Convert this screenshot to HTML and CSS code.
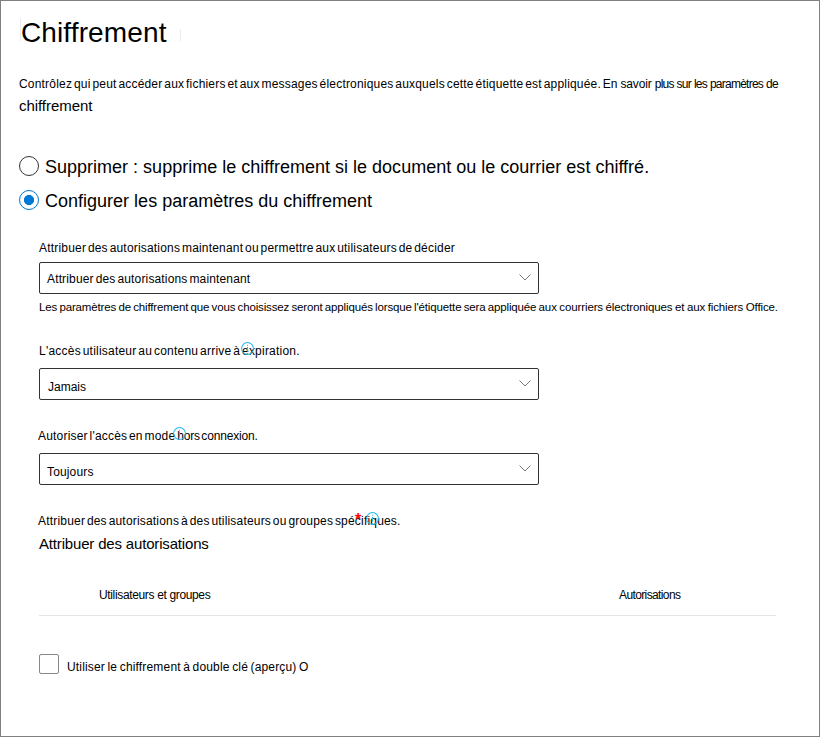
FILE: index.html
```html
<!DOCTYPE html>
<html lang="fr">
<head>
<meta charset="utf-8">
<title>Chiffrement</title>
<link rel="stylesheet" href="styles.css">
</head>
<body>
<main class="panel">
  <h1 class="title">Chiffrement</h1>
  <p class="intro">Contrôlez qui peut accéder aux fichiers et aux messages électroniques auxquels cette étiquette est appliquée. <span class="intro-link">En savoir <span class="tight">plus sur les paramètres de</span></span></p>
  <p class="intro-end">chiffrement</p>

  <div class="radios">
    <div class="radio"><span class="dot"></span><span class="radio-text">Supprimer : supprime le chiffrement si le document ou le courrier est chiffré.</span></div>
    <div class="radio"><span class="dot dot-on"></span><span class="radio-text">Configurer les paramètres du chiffrement</span></div>
  </div>

  <section class="settings">
    <div class="field field-assign">
      <div class="label">Attribuer des autorisations maintenant ou permettre aux utilisateurs de décider</div>
      <div class="select"><span class="value">Attribuer des autorisations maintenant</span><svg class="chevron" viewBox="0 0 12 7"><path d="M.5.5 6 6 11.5.5"/></svg></div>
      <div class="hint">Les paramètres de chiffrement que vous choisissez seront appliqués lorsque l'étiquette sera appliquée <span class="hint-end">aux courriers électroniques et aux fichiers Office.</span></div>
    </div>
    <div class="field field-expiry">
      <div class="label">L'accès utilisateur au contenu arrive à expiration.<svg class="info info-expiry" viewBox="0 0 14 14"><circle cx="7" cy="7" r="6.4"/><path d="M7 3v1M7 5.5v5"/></svg></div>
      <div class="select select-low"><span class="value value-in">Jamais</span><svg class="chevron" viewBox="0 0 12 7"><path d="M.5.5 6 6 11.5.5"/></svg></div>
    </div>
    <div class="field field-offline">
      <div class="label label-out">Autoriser l'accès en mode <span class="label-end">hors connexion.</span><svg class="info info-offline" viewBox="0 0 14 14"><circle cx="7" cy="7" r="6.4"/><path d="M7 3v1M7 5.5v5"/></svg></div>
      <div class="select select-low"><span class="value">Toujours</span><svg class="chevron" viewBox="0 0 12 7"><path d="M.5.5 6 6 11.5.5"/></svg></div>
    </div>
    <div class="field field-users">
      <div class="label label-out">Attribuer des autorisations à des utilisateurs ou groupes spécifiques.<span class="required">*</span><svg class="info info-users" viewBox="0 0 14 14"><circle cx="7" cy="7" r="6.4"/><path d="M7 3v1M7 5.5v5"/></svg></div>
      <div class="assign">Attribuer des autorisations</div>
    </div>
    <div class="table-head"><span class="users">Utilisateurs et groupes</span><span class="rights">Autorisations</span></div>
    <div class="check"><span class="box"></span><span class="check-text">Utiliser le chiffrement à double clé (aperçu) O</span></div>
  </section>
</main>
</body>
</html>
```
FILE: styles.css
```css
* { box-sizing: border-box; }
body {
  margin: 0;
  background: #fff;
  color: #000;
  font: 12px/16px "Liberation Sans", Arial, sans-serif;
}
.panel {
  height: 737px;
  padding: 16px 18px 0;
  border: 1px solid #808080;
  overflow: hidden;
  white-space: nowrap;
}
.title {
  position: relative;
  width: 162px;
  margin: 0 0 27px;
  padding-left: 2px;
  font-size: 28px;
  font-weight: 400;
  line-height: 32px;
  letter-spacing: .12px;
}
.title::before, .title::after {
  content: "";
  position: absolute;
  width: 1px;
  background: #ececec;
}
.title::before { left: 1px; top: 1px; height: 23px; }
.title::after { right: 0; top: 12px; height: 12px; }
.intro { margin: 0 0 4px; letter-spacing: .19px; word-spacing: -1.65px; }
.intro-link { letter-spacing: -.15px; word-spacing: 0; }
.tight { letter-spacing: -.75px; word-spacing: .3px; }
.intro-end { margin: 0; font-size: 15px; line-height: 20px; letter-spacing: -.05px; }
.radios { display: grid; gap: 13px; margin-top: 40px; }
.radio { display: flex; gap: 6px; height: 21px; }
.dot {
  width: 20px;
  height: 20px;
  border: 1px solid #333;
  border-radius: 50%;
}
.dot-on {
  border-color: #0078d4;
  background: radial-gradient(circle, #0078d4 4.7px, transparent 5.4px);
}
.radio-text { padding-top: 1px; font-size: 18px; line-height: 20px; letter-spacing: .007px; }
.settings { width: 737px; margin: 29px 0 0 20px; }
.label { position: relative; letter-spacing: .19px; word-spacing: -1.7px; }
.field-expiry .label { letter-spacing: .22px; }
.label-out { margin-left: -1px; }
.label-end { letter-spacing: -.17px; }
.select {
  display: flex;
  justify-content: space-between;
  width: 500px;
  height: 32px;
  margin-top: 6px;
  padding: 8px 7px 0;
  border: 1px solid #333;
  border-radius: 2px;
}
.value { letter-spacing: .15px; word-spacing: -1.5px; }
.value-in { margin-left: 1px; letter-spacing: 0; }
.select-low { margin-top: 9px; padding-top: 10px; }
.chevron {
  width: 12px;
  height: 7px;
  margin-top: 3px;
  fill: none;
  stroke: #777;
  stroke-width: 1;
}
.select-low .chevron { margin-top: 1px; }
.hint { margin-top: 5px; font-size: 11.5px; letter-spacing: -.14px; word-spacing: -.8px; }
.hint-end { letter-spacing: -.12px; word-spacing: -.5px; }
.field-expiry { margin-top: 28px; }
.field-offline, .field-users { margin-top: 28px; }
.info {
  position: absolute;
  top: -1px;
  width: 13px;
  height: 13px;
  fill: none;
  stroke: #27b7ee;
  stroke-width: 1.1;
}
.info-expiry { left: 202px; }
.info-offline { left: 135px; }
.info-users { left: 328px; }
.required {
  position: absolute;
  left: 317px;
  top: -1px;
  color: #f00;
  font-size: 16px;
  font-weight: 700;
}
.assign { margin-top: 5px; font-size: 15px; line-height: 20px; letter-spacing: -.17px; }
.table-head {
  display: grid;
  grid-template-columns: 520px 1fr;
  height: 29px;
  margin-top: 33px;
  padding-left: 60px;
  border-bottom: 1px solid #e5e5e5;
}
.users { letter-spacing: -.35px; }
.rights { letter-spacing: -.62px; }
.check { display: flex; gap: 8px; margin-top: 38px; }
.box {
  width: 20px;
  height: 20px;
  border: 1px solid #8a8886;
  border-radius: 2px;
}
.check-text { padding-top: 5px; letter-spacing: .17px; word-spacing: -1px; }
```
